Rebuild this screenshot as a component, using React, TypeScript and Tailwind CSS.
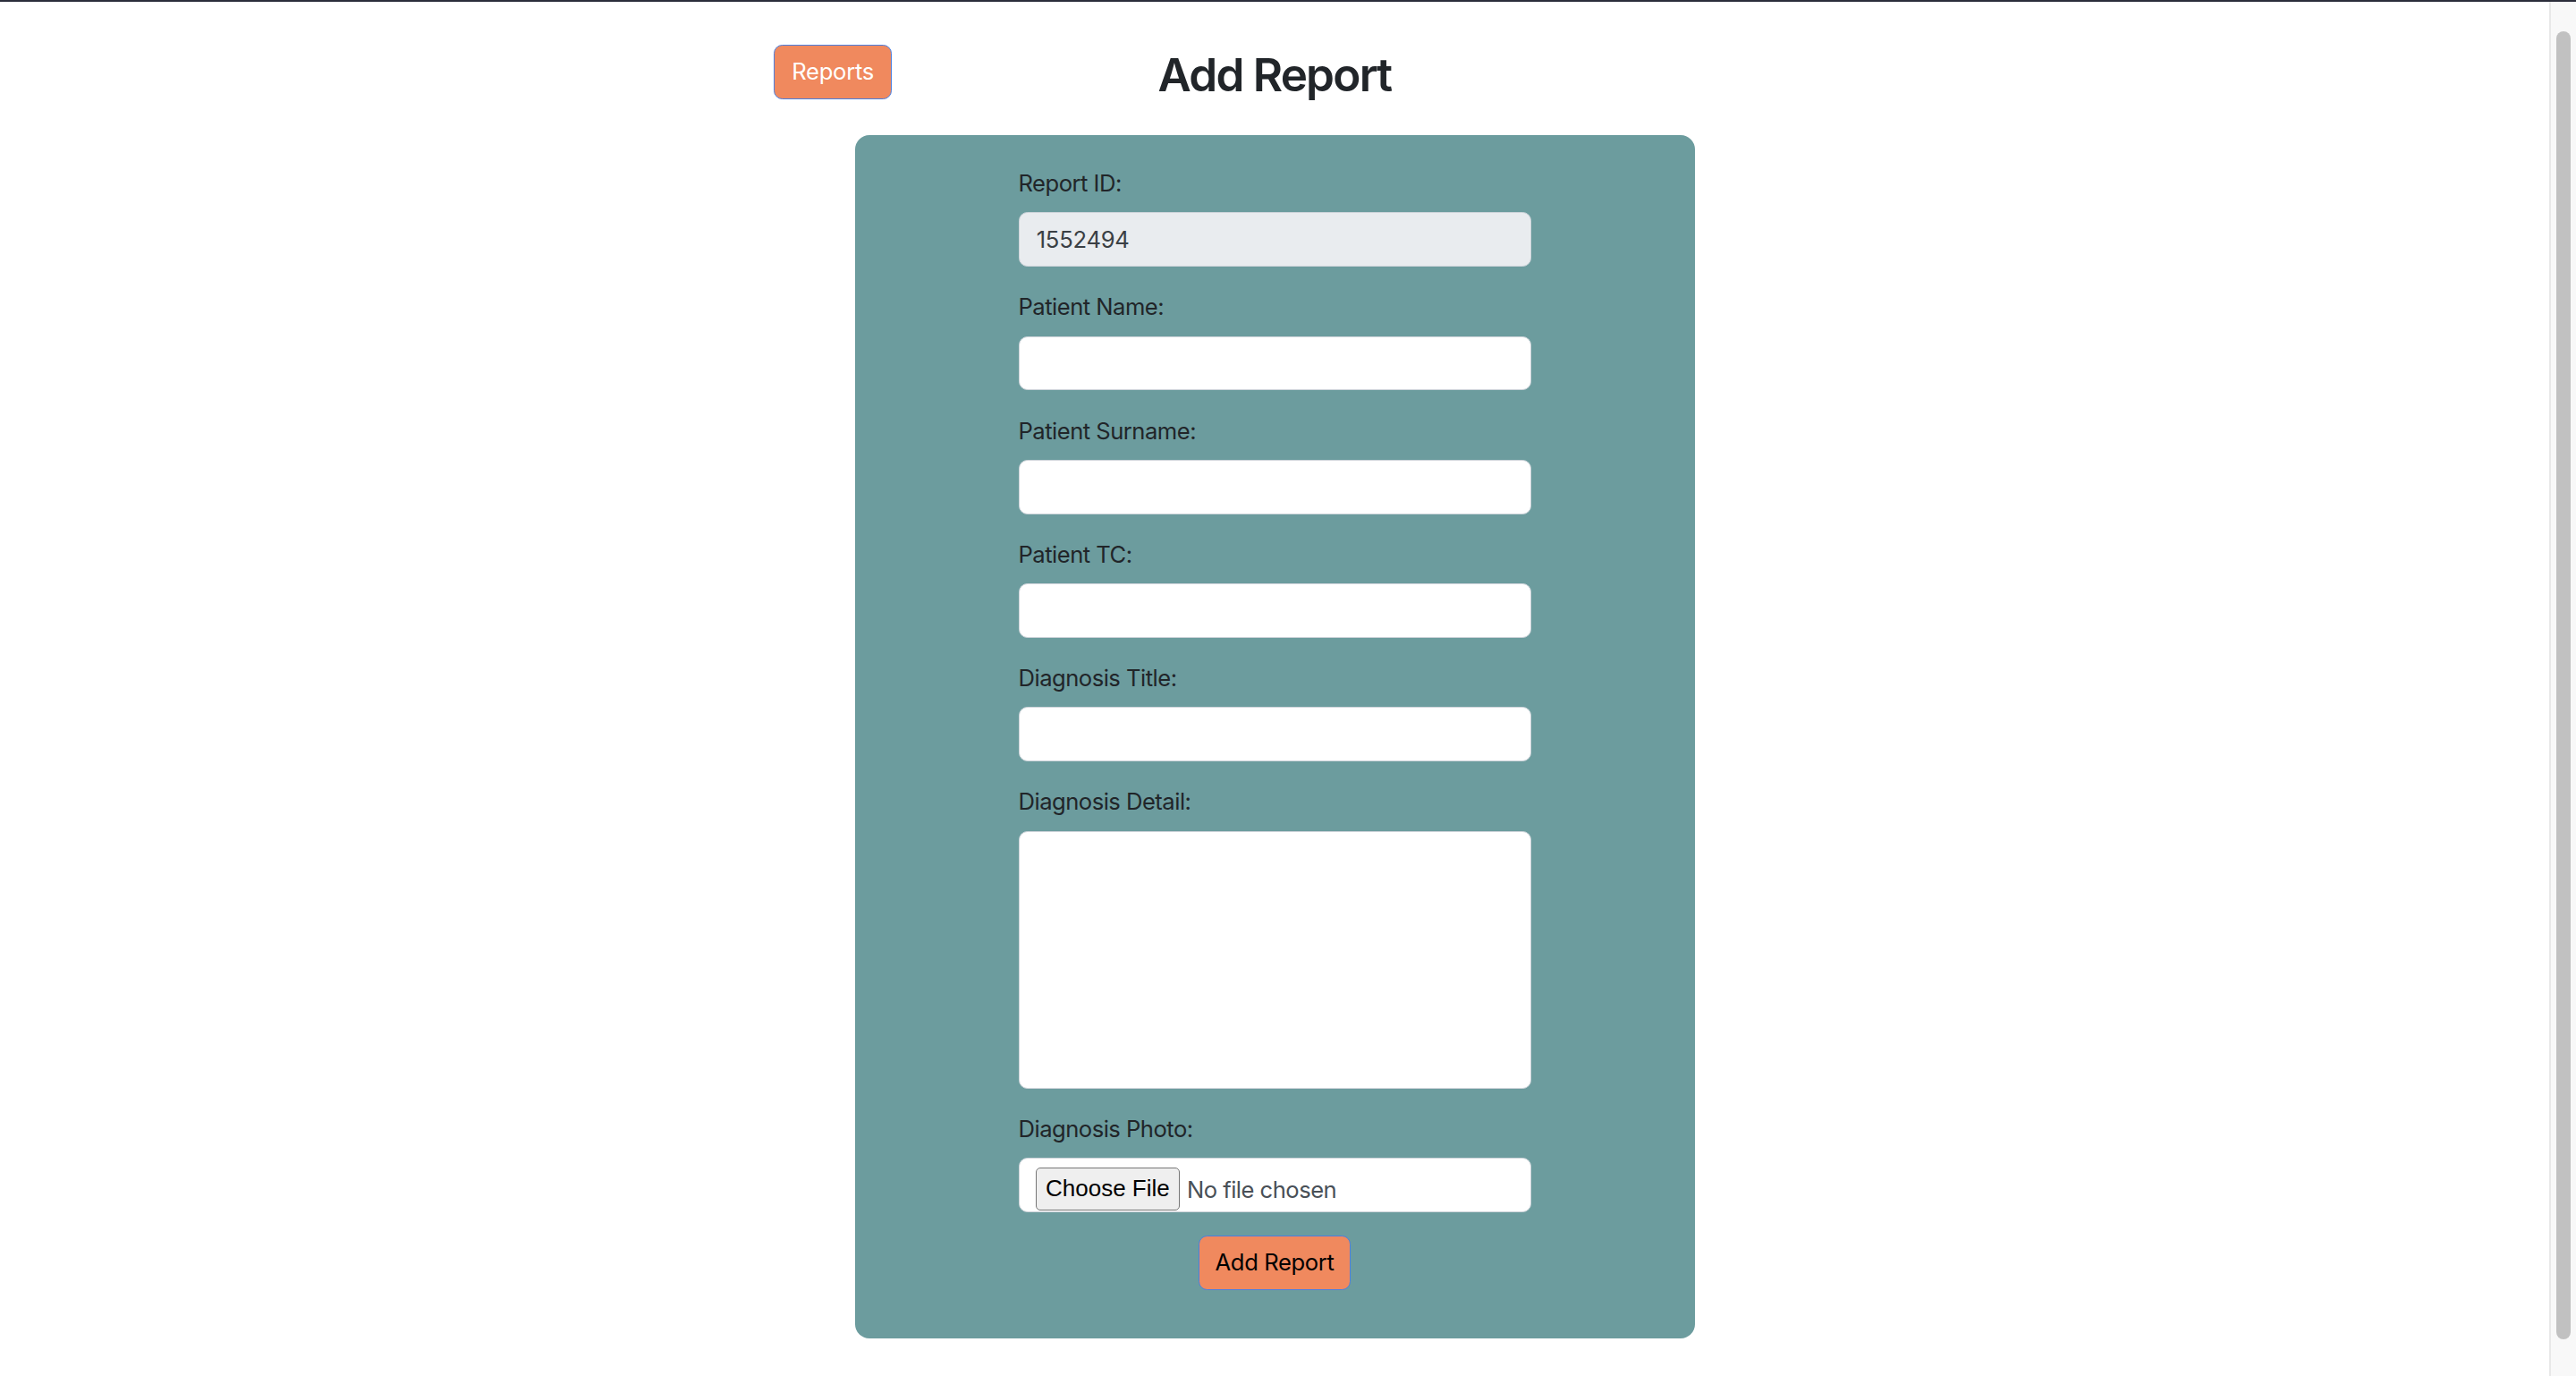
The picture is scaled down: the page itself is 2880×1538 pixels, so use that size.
import React from 'react';

const fields = [
  { key: 'reportId', label: 'Report ID:', value: '1552494', disabled: true },
  { key: 'name', label: 'Patient Name:' },
  { key: 'surname', label: 'Patient Surname:' },
  { key: 'tc', label: 'Patient TC:' },
  { key: 'title', label: 'Diagnosis Title:' },
];

function Label({ children }: { children: React.ReactNode }) {
  return (
    <label className="mb-[12.8px] block text-[25.6px] leading-[38.4px] tracking-[-0.02em] text-[#212529]">
      {children}
    </label>
  );
}

export default function App() {
  return (
    <div
      className="flex h-[1538px] flex-col overflow-hidden bg-white"
      style={{ fontFamily: 'Inter, "Noto Sans", sans-serif' }}
    >
      <div className="h-[2px] bg-[#2b2d3a]" />
      <div className="flex min-h-0 flex-1">
        <main className="flex-1 pt-[48px]">
          {/* Header */}
          <div className="mx-auto grid w-[1120px] grid-cols-[1fr_auto_1fr] items-start">
            <div>
              <button className="h-[60.8px] rounded-[9.6px] border-[1.6px] border-[#4a7fe0] bg-[#f0895e] px-[19.2px] text-[25.6px] leading-[38.4px] tracking-[-0.01em] text-white">
                Reports
              </button>
            </div>
            <h2 className="pt-[3px] text-[51.2px] font-semibold leading-[61px] tracking-[-0.035em] text-[#212529]">
              Add Report
            </h2>
            <div />
          </div>

          {/* Card */}
          <div className="mx-auto mt-[37px] w-[939px] rounded-[16px] bg-[#6c9c9e] pb-[54px] pt-[35px]">
            <form className="mx-auto w-[573px]" onSubmit={(e) => e.preventDefault()}>
              {fields.map((f) => (
                <div key={f.key} className="mb-[26.3px]">
                  <Label>{f.label}</Label>
                  <input
                    type="text"
                    defaultValue={f.value}
                    disabled={f.disabled}
                    className={
                      'block h-[60.8px] w-full rounded-[9.6px] border-[1.6px] border-[#ced4da] px-[19.2px] text-[25.6px] tracking-[-0.01em] outline-none ' +
                      (f.disabled ? 'bg-[#e9ecef] text-[#3a3f44]' : 'bg-white text-[#212529]')
                    }
                  />
                </div>
              ))}

              <div className="mb-[26.3px]">
                <Label>Diagnosis Detail:</Label>
                <textarea className="block h-[288px] w-full resize-none rounded-[9.6px] border-[1.6px] border-[#ced4da] bg-white px-[19.2px] py-[9.6px] text-[25.6px] outline-none" />
              </div>

              <div className="mb-[26.3px]">
                <Label>Diagnosis Photo:</Label>
                <div className="flex h-[60.8px] w-full items-start rounded-[9.6px] border-[1.6px] border-[#ced4da] bg-white pl-[18.4px] pt-[9.6px]">
                  <span
                    className="flex h-[48px] w-[161px] items-center justify-center rounded-[5px] border-[1.5px] border-[#767676] bg-[#efefef] text-[26px] text-black"
                    style={{ fontFamily: '"Liberation Sans", Arial, sans-serif' }}
                  >
                    Choose File
                  </span>
                  <span className="ml-[8px] self-center pt-[2px] text-[25.6px] tracking-[-0.02em] text-[#495057]">
                    No file chosen
                  </span>
                </div>
              </div>

              <div className="flex justify-center">
                <button
                  type="submit"
                  className="h-[60.8px] w-[170px] rounded-[9.6px] border-[1.6px] border-[#4a7fe0] bg-[#f0895e] text-[25.6px] leading-[38.4px] tracking-[-0.015em] text-black"
                >
                  Add Report
                </button>
              </div>
            </form>
          </div>
        </main>

        {/* Scrollbar */}
        <div className="w-[30px] border-l-[2px] border-[#e8e8e8] bg-[#f8f8f8] px-[6px] pt-[33px]">
          <div className="h-[1462px] rounded-full bg-[#c1c1c1]" />
        </div>
      </div>
    </div>
  );
}
